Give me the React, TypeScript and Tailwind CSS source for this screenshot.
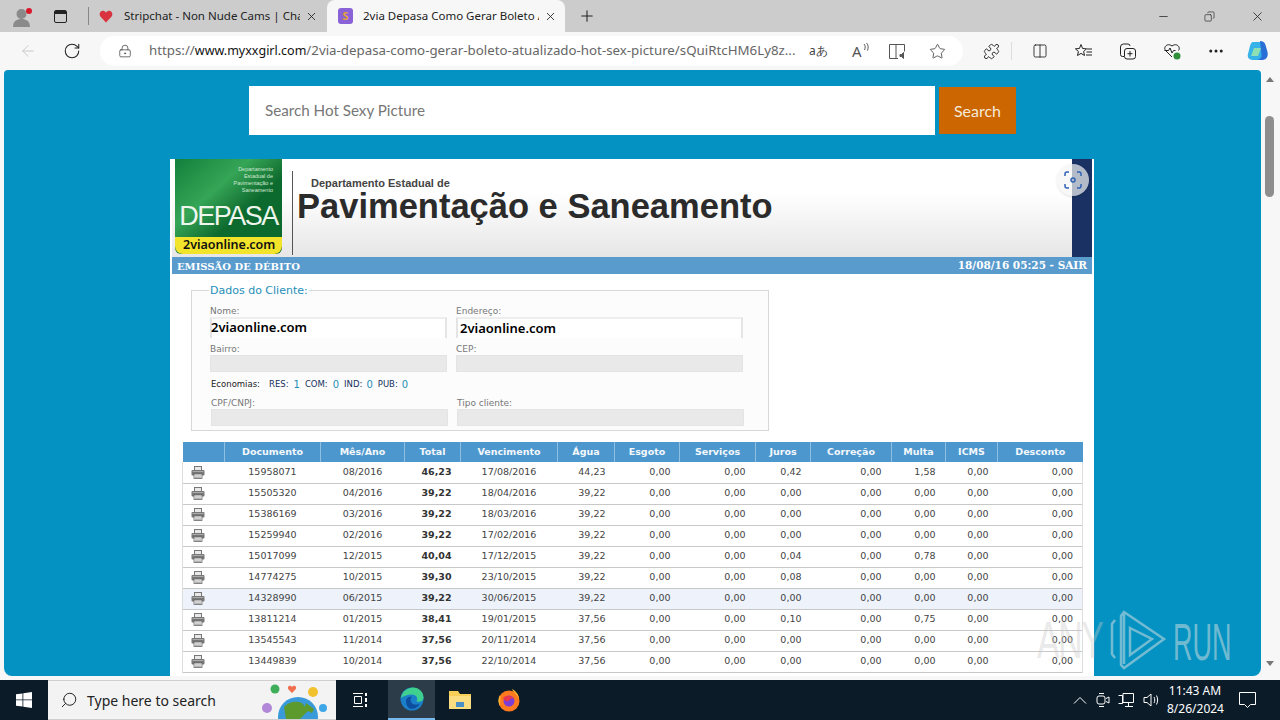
import React from "react";
import {
  ArrowLeft,
  Columns2,
  Copy,
  Ellipsis,
  LockKeyhole,
  Minus,
  Plus,
  Puzzle,
  RotateCw,
  Search,
  Star,
  X,
} from "lucide-react";

type Row = {
  doc: string;
  month: string;
  total: string;
  due: string;
  water: string;
  interest?: string;
  fine?: string;
  highlight?: boolean;
};

const rows: Row[] = [
  { doc: "15958071", month: "08/2016", total: "46,23", due: "17/08/2016", water: "44,23", interest: "0,42", fine: "1,58" },
  { doc: "15505320", month: "04/2016", total: "39,22", due: "18/04/2016", water: "39,22" },
  { doc: "15386169", month: "03/2016", total: "39,22", due: "18/03/2016", water: "39,22" },
  { doc: "15259940", month: "02/2016", total: "39,22", due: "17/02/2016", water: "39,22" },
  { doc: "15017099", month: "12/2015", total: "40,04", due: "17/12/2015", water: "39,22", interest: "0,04", fine: "0,78" },
  { doc: "14774275", month: "10/2015", total: "39,30", due: "23/10/2015", water: "39,22", interest: "0,08" },
  { doc: "14328990", month: "06/2015", total: "39,22", due: "30/06/2015", water: "39,22", highlight: true },
  { doc: "13811214", month: "01/2015", total: "38,41", due: "19/01/2015", water: "37,56", interest: "0,10", fine: "0,75" },
  { doc: "13545543", month: "11/2014", total: "37,56", due: "20/11/2014", water: "37,56" },
  { doc: "13449839", month: "10/2014", total: "37,56", due: "22/10/2014", water: "37,56" },
];

const headers = [
  { label: "", cls: "w-[42px]" },
  { label: "Documento", cls: "w-[96px]" },
  { label: "Mês/Ano", cls: "w-[84px]" },
  { label: "Total", cls: "w-[56px]" },
  { label: "Vencimento", cls: "w-[97px]" },
  { label: "Água", cls: "w-[57px]" },
  { label: "Esgoto", cls: "w-[65px]" },
  { label: "Serviços", cls: "w-[76px]" },
  { label: "Juros", cls: "w-[55px]" },
  { label: "Correção", cls: "w-[81px]" },
  { label: "Multa", cls: "w-[54px]" },
  { label: "ICMS", cls: "w-[52px]" },
  { label: "Desconto", cls: "w-[85px]" },
];

const PrinterIcon = () => (
  <svg width="14" height="13" viewBox="0 0 14 13" className="mx-auto block">
    <rect x="3.5" y="0.5" width="7" height="4" fill="#e8e8e8" stroke="#777" />
    <rect x="0.5" y="4" width="13" height="5.5" rx="1" fill="#777" />
    <rect x="1.5" y="5" width="11" height="1" fill="#aaa" />
    <rect x="3" y="8" width="8" height="4.5" fill="#f0f0f0" stroke="#666" strokeWidth="0.8" />
    <path d="M4 10h6M4 11.5h6" stroke="#999" strokeWidth="0.7" />
  </svg>
);

const Tab = ({
  title,
  cls,
  icon,
}: {
  title: string;
  cls: string;
  icon: React.ReactNode;
}) => (
  <div className={`flex h-[32px] shrink-0 items-center ${cls}`}>
    <div className="flex w-[25px] shrink-0 justify-start">{icon}</div>
    <div className="flex-1 overflow-hidden whitespace-nowrap text-[11.5px] text-[#222]">
      {title}
    </div>
    <X size={13} strokeWidth={1.6} className="ml-[5px] shrink-0 text-[#222]" />
  </div>
);

const TabStrip = () => (
  <div className="flex h-[32px] shrink-0 items-center bg-[#cccccc]">
    <div className="relative ml-[11px] mr-[21px] h-[22px] w-[22px]">
      <svg width="22" height="22" viewBox="0 0 22 22">
        <circle cx="10.5" cy="9" r="5" fill="#8a8a8a" />
        <path d="M2 22c0-6 4-8 8.500-8s8.500 2 8.500 8z" fill="#8a8a8a" />
      </svg>
      <span className="absolute right-[1px] top-[3px] h-[6px] w-[6px] rounded-full bg-[#d9182a]" />
    </div>
    <div className="flex h-[13px] w-[13px] flex-col rounded-[2px] border border-[#222]">
      <div className="h-[3px] bg-[#222]" />
    </div>
    <div className="ml-[21px] mr-[3px] h-[18px] w-px bg-[#888]" />
    <Tab
      cls="w-[235px] pl-[7px] pr-[9px]"
      title="Stripchat - Non Nude Cams | Cha"
      icon={
        <svg width="14" height="13" viewBox="0 0 16 15">
          <path d="M8 14.500 1.500 7.500C-1 4 2.500-.5 6 1.200 7 1.700 8 3 8 3s1-1.300 2-1.800C13.500-.5 17 4 14.500 7.500z" fill="#d8333f" />
        </svg>
      }
    />
    <Tab
      cls="w-[238px] rounded-t-lg bg-[#f7f7f7] pl-[11px] pr-[8px]"
      title="2via Depasa Como Gerar Boleto A"
      icon={
        <div className="flex h-[16px] w-[15px] items-center justify-center rounded-[3px] bg-[#8a62d8] text-[11px] font-bold text-[#e2a23a]">
          S
        </div>
      }
    />
    <Plus size={18} strokeWidth={1.4} className="ml-[13px] text-[#222]" />
    <div className="flex-1" />
    <Minus size={13} strokeWidth={1.4} className="mr-[34px] text-[#222]" />
    <Copy size={11} strokeWidth={1.4} className="mr-[35px] -scale-x-100 text-[#222]" />
    <X size={15} strokeWidth={1.3} className="mr-[15px] text-[#222]" />
  </div>
);

const ToolbarIcon = ({ children, cls }: { children: React.ReactNode; cls: string }) => (
  <div className={`flex shrink-0 items-center justify-center ${cls}`}>{children}</div>
);

const Toolbar = () => (
  <div className="flex h-[38px] shrink-0 items-center bg-[#f7f7f7]">
    <ToolbarIcon cls="w-[20px] ml-[18px]">
      <ArrowLeft size={18} strokeWidth={1.2} className="text-[#c4c4c4]" />
    </ToolbarIcon>
    <ToolbarIcon cls="w-[20px] ml-[24px]">
      <RotateCw size={18} strokeWidth={1.4} className="text-[#222]" />
    </ToolbarIcon>
    <div className="ml-[18px] flex h-[30px] w-[863px] items-center rounded-full bg-white pl-[18px]">
      <LockKeyhole size={14} strokeWidth={1.3} className="text-[#444]" />
      <div className="ml-[17px] w-[650px] overflow-hidden whitespace-nowrap font-['Noto_Sans',sans-serif] text-[13.3px] text-[#666]">
        https://<span className="text-[12.5px] text-[#111]">www.myxxgirl.com</span>
        /2via-depasa-como-gerar-boleto-atualizado-hot-sex-picture/sQuiRtcHM6Ly8z...
      </div>
      <span className="ml-[10px] w-[20px] text-[12px] text-[#444]">aあ</span>
      <span className="ml-[23px] w-[11px] text-[15px] text-[#555]">A</span>
      <svg width="6" height="10" viewBox="0 0 6 10" fill="none" stroke="#555" className="mb-[6px]">
        <path d="M1 1c1.500 1.500 1.500 4 .5 6M3.500 0c2 2 2 5 1 7.500" />
      </svg>
      <svg width="18" height="17" viewBox="0 0 18 17" fill="none" stroke="#555" className="ml-[19px]">
        <path d="M1.500 1.500h6.500v14H1.500zM8 1.500h8.500v7M8 15.500h2" />
        <path d="M12 11.500h1.500l2-2v6l-2-2H12z" fill="#555" />
      </svg>
      <Star size={17} strokeWidth={1.2} className="ml-[23px] text-[#444]" />
    </div>
    <ToolbarIcon cls="w-[18px] ml-[19px]">
      <Puzzle size={17} strokeWidth={1.3} className="text-[#222]" />
    </ToolbarIcon>
    <div className="ml-[11px] h-[18px] w-px bg-[#ddd]" />
    <ToolbarIcon cls="w-[18px] ml-[19px]">
      <Columns2 size={16} strokeWidth={1.3} className="text-[#222]" />
    </ToolbarIcon>
    <ToolbarIcon cls="w-[18px] ml-[26px]">
      <svg width="18" height="17" viewBox="0 0 18 17" fill="none" stroke="#222">
        <path d="M6 1.500 7.600 5.500l4 .3-3 2.700.9 4L6 10.400l-3.500 2.100.9-4-3-2.700 4-.3zM12 6h5M11.500 9h5.500M11 12h6" />
      </svg>
    </ToolbarIcon>
    <ToolbarIcon cls="w-[18px] ml-[26px]">
      <svg width="18" height="18" viewBox="0 0 18 18" fill="none" stroke="#222">
        <path d="M5 14.500H3.500a2 2 0 0 1-2-2V5a3 3 0 0 1 3-3H9a2 2 0 0 1 2 2" />
        <rect x="5.500" y="6.500" width="11" height="10.500" rx="2.500" />
        <path d="M11 9v5.500M8.500 11.700h5" />
      </svg>
    </ToolbarIcon>
    <ToolbarIcon cls="w-[18px] ml-[26px]">
      <svg width="18" height="18" viewBox="0 0 18 18" fill="none">
        <path d="M9 15 2.500 8.500C0 5 4.500.5 9 4c4.500-3.500 9 1 6.500 4.500" stroke="#222" />
        <path d="M1.500 8.500h4L7 6l2 5 1.500-2.500h2" stroke="#222" />
        <circle cx="14" cy="14" r="3.500" fill="#2f8f3a" />
      </svg>
    </ToolbarIcon>
    <ToolbarIcon cls="w-[18px] ml-[26px]">
      <Ellipsis size={18} strokeWidth={2} className="text-[#222]" />
    </ToolbarIcon>
    <ToolbarIcon cls="w-[24px] ml-[21px]">
      <svg width="26" height="26" viewBox="0 0 24 24">
        <path d="M7 3h8l4 8-5 10H7c-4 0-6-3-5-6l2-8c.5-2 1.500-4 3-4z" fill="#35b3e8" />
        <path d="M14 2c3 0 4.500 1 5.500 4l2 7c1 4-1 8-5 8h-5c3-1 4-3 4-5z" fill="#2a6fd6" />
        <path d="M8 9h7l-3 8H5z" fill="#8ee0b4" />
      </svg>
    </ToolbarIcon>
  </div>
);

const Field = ({
  label,
  value,
  valueCls,
  cls,
}: {
  label: string;
  value?: string;
  valueCls?: string;
  cls: string;
}) => (
  <div className={cls}>
    <div className="h-[11px] font-['DejaVu_Sans',sans-serif] text-[9px] leading-[11px] text-[#777]">
      {label}
    </div>
    {value ? (
      <div className="h-[21px] border-x-2 border-t-2 border-x-[#e4e4e4] border-t-[#eeeeee] bg-white font-['Noto_Sans',sans-serif] text-[13px] font-semibold leading-[17px] text-black">
        <div className={valueCls}>{value}</div>
      </div>
    ) : (
      <div className="h-[17px] border border-[#e4e4e4] bg-[#e9e9e9]" />
    )}
  </div>
);

const ClientBox = () => (
  <fieldset className="ml-[19px] h-[147px] w-[578px] border border-[#d8d8d8] bg-[#fcfcfc] pl-[18px]">
    <legend className="ml-[-1px] px-[1px] font-['DejaVu_Sans',sans-serif] text-[11px] leading-[13px] text-[#1f8fb8]">
      Dados do Cliente:
    </legend>
    <div className="mt-[9px] flex">
      <Field label="Nome:" value="2viaonline.com" valueCls="-ml-[1px]" cls="w-[237px]" />
      <Field label="Endereço:" value="2viaonline.com" valueCls="ml-[2px] mt-[1px]" cls="ml-[9px] w-[287px]" />
    </div>
    <div className="mt-[6px] flex">
      <Field label="Bairro:" cls="w-[237px]" />
      <Field label="CEP:" cls="ml-[9px] w-[287px]" />
    </div>
    <div className="ml-[1px] mt-[6px] flex h-[13px] items-center font-['DejaVu_Sans',sans-serif] text-[8.500px] text-[#222]">
      Economias:
      <span className="ml-[9px] font-medium text-[#14305f]">RES:</span>
      <span className="ml-[5px] text-[10px] text-[#1f8fb8]">1</span>
      <span className="ml-[5px] font-medium text-[#14305f]">COM:</span>
      <span className="ml-[5px] text-[10px] text-[#1f8fb8]">0</span>
      <span className="ml-[5px] font-medium text-[#14305f]">IND:</span>
      <span className="ml-[4px] text-[10px] text-[#1f8fb8]">0</span>
      <span className="ml-[5px] font-medium text-[#14305f]">PUB:</span>
      <span className="ml-[4px] text-[10px] text-[#1f8fb8]">0</span>
    </div>
    <div className="ml-[1px] mt-[7px] flex">
      <Field label="CPF/CNPJ:" cls="w-[237px]" />
      <Field label="Tipo cliente:" cls="ml-[9px] w-[287px]" />
    </div>
  </fieldset>
);

const Logo = () => (
  <div className="ml-[3px] flex h-[95px] w-[107px] shrink-0 flex-col overflow-hidden rounded-b-[6px] bg-gradient-to-br from-[#12803c] via-[#35a556] via-[35%] to-[#0d6a2e] to-[60%]">
    <div className="pr-[9px] pt-[7px] text-right font-['Liberation_Sans',sans-serif] text-[5.500px] leading-[7px] text-[#cfe8d2]">
      Departamento
      <br />
      Estadual de
      <br />
      Pavimentação e
      <br />
      Saneamento
    </div>
    <div className="mt-[7px] text-center font-['Liberation_Sans',sans-serif] text-[27px] leading-[30px] tracking-[-1.500px] text-[#eef6ee]">
      DEPASA
    </div>
    <div className="mt-auto h-[17px] rounded-b-[8px] bg-[#f2e42a] pl-[8px] font-['Noto_Sans',sans-serif] text-[12.500px] font-semibold leading-[16px] text-[#111]">
      2viaonline.com
    </div>
  </div>
);

const Banner = () => (
  <div className="flex h-[98px] bg-gradient-to-b from-white from-[35%] to-[#e6e6e6]">
    <Logo />
    <div className="ml-[10px] mt-[12px] h-[84px] w-px bg-[#555]" />
    <div className="ml-[4px] pt-[17px] font-['Liberation_Sans',sans-serif]">
      <div className="ml-[14px] text-[11px] font-bold leading-[14px] text-[#444]">
        Departamento Estadual de
      </div>
      <div className="text-[34.500px] font-bold leading-[32px] text-[#2b2b2b]">
        Pavimentação e Saneamento
      </div>
    </div>
    <div className="ml-auto w-[20px] bg-[#1a3263]" />
  </div>
);

const DebtTable = () => (
  <table className="ml-[10px] mt-[11px] w-[900px] table-fixed border-collapse font-['DejaVu_Sans',sans-serif] text-[9.500px] text-[#444]">
    <thead>
      <tr className="h-[20px] bg-[#4d97cf] text-[9.500px] font-bold text-[#f4f8fb]">
        {headers.map((h) => (
          <th key={h.label} className={`border-r border-[#8fbfe0] p-0 last:border-r-0 ${h.cls}`}>
            {h.label}
          </th>
        ))}
      </tr>
    </thead>
    <tbody>
      {rows.map((r) => (
        <tr
          key={r.doc}
          className={`h-[21px] border-b border-[#c8c8c8] ${r.highlight ? "bg-[#edf2fb]" : "bg-white"}`}
        >
          <td className="border-l border-[#dddddd] p-0 pr-[11px]">
            <PrinterIcon />
          </td>
          <td className="p-0 text-center">{r.doc}</td>
          <td className="p-0 text-center">{r.month}</td>
          <td className="p-0 pr-[9px] text-right font-bold text-[#333]">{r.total}</td>
          <td className="p-0 text-center">{r.due}</td>
          <td className="p-0 pr-[9px] text-right">{r.water}</td>
          <td className="p-0 pr-[9px] text-right">0,00</td>
          <td className="p-0 pr-[10px] text-right">0,00</td>
          <td className="p-0 pr-[9px] text-right">{r.interest ?? "0,00"}</td>
          <td className="p-0 pr-[10px] text-right">0,00</td>
          <td className="p-0 pr-[10px] text-right">{r.fine ?? "0,00"}</td>
          <td className="p-0 pr-[9px] text-right">0,00</td>
          <td className="border-r border-[#dddddd] p-0 pr-[9px] text-right">0,00</td>
        </tr>
      ))}
    </tbody>
  </table>
);

const Watermark = () => (
  <div className="pointer-events-none absolute bottom-[8px] left-[1037px] flex items-center font-['Liberation_Sans',sans-serif] text-[52px] leading-none">
    <span className="w-[73px] origin-left scale-x-[0.65] tracking-[-2px] text-[#c8c8c8]/40">ANY</span>
    <svg width="58" height="64" viewBox="0 0 58 64" fill="none" stroke="#8ec5d6" strokeOpacity="0.8" strokeWidth="2.500">
      <path d="M5 12 2 16v30l3 4M14 4l40 27-40 29-3-3V8zM14 4v52M20 20l22 11-22 16z" />
    </svg>
    <span className="ml-[5px] mt-[4px] origin-left scale-x-[0.52] text-[#8ec5d6]/80">RUN</span>
  </div>
);

const Page = () => (
  <div className="relative flex h-[610px] shrink-0 overflow-hidden bg-[#f7f7f7]">
    <div className="ml-[4px] h-[606px] w-[1257px] overflow-hidden rounded-b-[8px] rounded-t-[4px] bg-[#0492c2]">
      <div className="ml-[245px] mt-[16px] flex h-[49px]">
        <div className="flex h-[49px] w-[686px] items-center bg-white pl-[16px] font-['Lato',sans-serif] text-[15.200px] text-[#777]">
          Search Hot Sexy Picture
        </div>
        <div className="ml-[4px] mt-[1px] flex h-[47px] w-[77px] items-center justify-center bg-[#cc6600] font-['Lato',sans-serif] text-[16px] text-[#f5e9dc]">
          Search
        </div>
      </div>
      <div className="relative ml-[166px] mt-[24px] h-[540px] w-[924px] border-x-2 border-x-white bg-white">
        <Banner />
        <div className="flex h-[17px] items-center justify-between bg-[#5a9bcd] px-[5px] pt-[1px] font-['DejaVu_Serif',serif] font-bold text-white">
          <span className="text-[10px]">EMISSÃO DE DÉBITO</span>
          <span className="text-[10.500px]">18/08/16 05:25 - SAIR</span>
        </div>
        <div className="h-[10px]" />
        <ClientBox />
        <DebtTable />
        <div className="absolute right-[3px] top-[5px] flex h-[32px] w-[32px] items-center justify-center rounded-full bg-[#f5f5f5]/70 shadow-sm">
          <svg width="18" height="18" viewBox="0 0 18 18" fill="none" stroke="#2f62b5" strokeWidth="1.500">
            <path d="M1 5V3a2 2 0 0 1 2-2h2M13 1h2a2 2 0 0 1 2 2v2M17 13v2a2 2 0 0 1-2 2h-2M5 17H3a2 2 0 0 1-2-2v-2" />
            <circle cx="9" cy="9" r="2" />
          </svg>
        </div>
      </div>
    </div>
    <div className="ml-[1px] flex w-[15px] flex-col items-center pt-[7px]">
      <div className="h-0 w-0 border-x-[4px] border-b-[5px] border-x-transparent border-b-[#777]" />
      <div className="mt-[34px] h-[81px] w-[9px] rounded-full bg-[#8e8e8e]" />
      <div className="mb-[14px] mt-auto h-0 w-0 border-x-[4px] border-t-[5px] border-x-transparent border-t-[#777]" />
    </div>
    <Watermark />
  </div>
);

const Taskbar = () => (
  <div className="flex h-[40px] shrink-0 items-center bg-[#0b1b28] text-white">
    <div className="flex w-[48px] justify-center">
      <svg width="16" height="16" viewBox="0 0 16 16" fill="#fff">
        <path d="M0 2.300 6.500 1.400V7.500H0zM7.300 1.300 16 0v7.500H7.300zM0 8.300h6.500v6.200L0 13.700zM7.300 8.300H16V16l-8.700-1.300z" />
      </svg>
    </div>
    <div className="flex h-[40px] w-[288px] items-center overflow-hidden border-y border-[#cfcfcf] bg-[#f3f3f3] pl-[12px]">
      <Search size={18} strokeWidth={1.2} className="-scale-x-100 text-[#111]" />
      <span className="ml-[9px] font-['Noto_Sans',sans-serif] text-[14px] text-[#222]">Type here to search</span>
      <svg width="72" height="38" viewBox="0 0 72 38" className="ml-[46px] shrink-0">
        <circle cx="36" cy="36" r="20" fill="#3a9ad9" />
        <path d="M22 26c6-6 12-6 18-4l6 8-8 8H24zM44 22l8 6-2 4-8-4z" fill="#5c9a2e" />
        <path d="M30 6c-2-3-6 0-3 3l3 3 3-3c3-3-1-6-3-3z" fill="#ef6f4f" />
        <circle cx="13" cy="8" r="4.500" fill="#3fae5a" />
        <circle cx="51" cy="11" r="5" fill="#f2c12e" />
        <circle cx="5" cy="27" r="5" fill="#b187d8" />
        <circle cx="61" cy="27" r="4" fill="#3fa6e8" />
      </svg>
    </div>
    <div className="flex w-[52px] justify-center pr-[4px]">
      <svg width="16" height="16" viewBox="0 0 16 16" fill="none" stroke="#fff">
        <path d="M1 1.500h10M1 14.500h10M2.500 4.500h7v7h-7z" />
        <path d="M14 1v3M14 6v4M14 12v3" strokeWidth="2" />
      </svg>
    </div>
    <div className="flex h-[40px] w-[47px] items-center justify-center border-b-2 border-[#76b9ed] bg-[#2c3c48]">
      <svg width="24" height="24" viewBox="0 0 24 24">
        <circle cx="12" cy="12" r="11.500" fill="#1b7fc9" />
        <path d="M1 11C2 4 8 .5 13 .5c6 0 10.500 4.500 10.500 10 0 4-4 5-7 4 2-3 0-7-4.500-7-5 0-9 2-11 3.500z" fill="#3fd08f" />
        <path d="M6 14c0-3 3-5 6-4-2 1-2 5 1 7 2 1 5 1 7-.5-2 4-6 6-10 5-3-1-4-5-4-7.500z" fill="#0d4f9e" />
      </svg>
    </div>
    <div className="flex w-[50px] justify-center">
      <svg width="24" height="20" viewBox="0 0 24 20">
        <path d="M1 1h9l2 3h11v15H1z" fill="#f6cf57" />
        <rect x="1" y="6" width="22" height="13" fill="#f9dd80" />
        <rect x="8" y="12" width="8" height="5" fill="#4a90c8" />
      </svg>
    </div>
    <div className="flex w-[48px] justify-center">
      <svg width="24" height="24" viewBox="0 0 24 24">
        <circle cx="12" cy="13" r="10.500" fill="#ff7a1f" />
        <path d="M15 1c1 3 5 5 7 10 0-4-3-8-7-10zM3 7c-2 3-2 8 0 11 0-4 1-8 0-11z" fill="#ffb52e" />
        <circle cx="12" cy="13" r="5.500" fill="#7a3dd8" />
        <path d="M6 10c3-3 9-3 11 1-3-1-4 0-5 2-3 1-5-1-6-3z" fill="#e8384f" />
      </svg>
    </div>
    <div className="flex-1" />
    <svg width="14" height="8" viewBox="0 0 14 8" fill="none" stroke="#fff" className="mr-[9px]">
      <path d="M1 7.500 7 1.500l6 6" />
    </svg>
    <svg width="14" height="16" viewBox="0 0 14 16" fill="none" stroke="#fff" className="mr-[8px]">
      <rect x="1" y="4" width="8" height="8" rx="2" />
      <path d="M3 1.500h5M3 14.500h5M10 6.500l3-1.500v6l-3-1.500" />
    </svg>
    <svg width="16" height="14" viewBox="0 0 16 14" fill="none" stroke="#fff" className="mr-[9px]">
      <path d="M5 .5h10.500v9H5zM.5 2.500h4v8h-4M7 13.500h8M10.500 9.500v4" />
    </svg>
    <svg width="17" height="14" viewBox="0 0 17 14" fill="none" stroke="#fff" className="mr-[7px]">
      <path d="M1 4.500h3L8 1v12L4 9.500H1zM11 4c1 2 1 4 0 6M13.500 2.500c1.500 3 1.500 6 0 9" />
    </svg>
    <div className="mr-[16px] w-[56px] text-center font-['Noto_Sans',sans-serif] text-[12px] leading-[18px]">
      11:43 AM
      <br />
      8/26/2024
    </div>
    <svg width="17" height="16" viewBox="0 0 17 16" fill="none" stroke="#fff" className="mr-[24px]">
      <path d="M.5.500h16v12h-5l-3 3-3-3h-5z" />
    </svg>
  </div>
);

const App = () => {
  return (
    <div className="flex h-[720px] w-[1280px] flex-col overflow-hidden font-['Noto_Sans',sans-serif]">
      <TabStrip />
      <Toolbar />
      <Page />
      <Taskbar />
    </div>
  );
};

export default App;
